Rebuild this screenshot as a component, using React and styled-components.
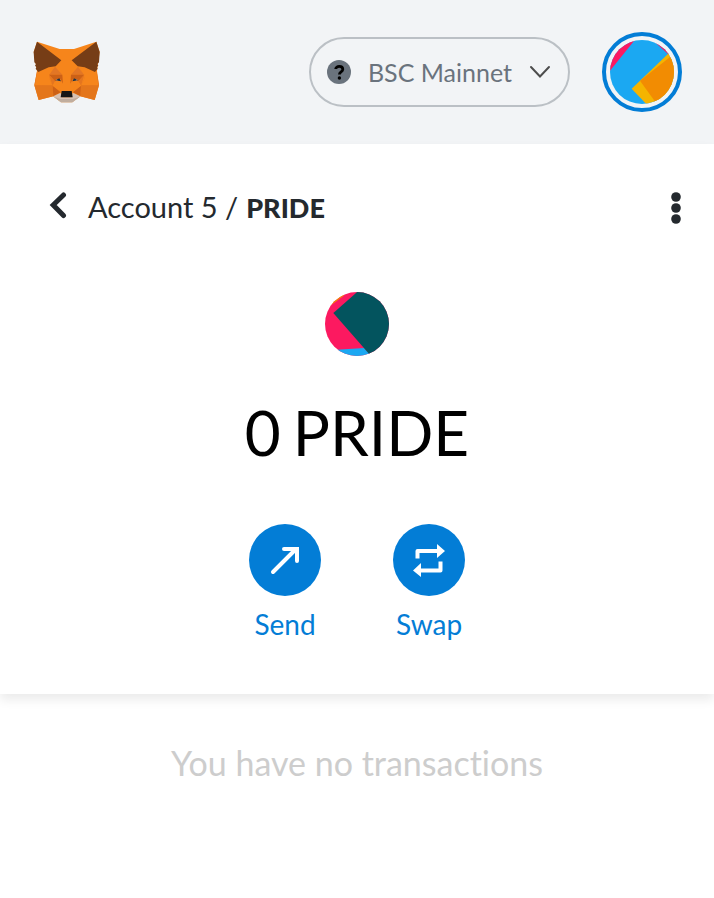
import React from "react";
import styled, { createGlobalStyle } from "styled-components";

const GlobalStyle = createGlobalStyle`
  * { box-sizing: border-box; }
  body {
    margin: 0;
    background: #fff;
    font-family: Lato, "Liberation Sans", sans-serif;
    font-variant-ligatures: none;
  }
  button { font: inherit; color: inherit; background: none; border: 0; padding: 0; cursor: pointer; }
  svg { display: block; }
`;

const Header = styled.header`
  display: flex;
  align-items: center;
  gap: 32px;
  height: 144px;
  padding: 0 32px;
  background: #f2f4f6;
`;

const LogoButton = styled.button`
  margin-right: auto;
`;

const NetworkButton = styled.button`
  && {
    display: flex;
    align-items: center;
    gap: 17px;
    height: 70px;
    padding: 0 17px 0 16px;
    border: 2px solid #bbc0c5;
    border-radius: 35px;
    color: #6a737d;
    font-size: 25px;
    line-height: 36px;
  }
`;

const AccountButton = styled.button`
  && {
    padding: 4px;
    border: 4px solid #037dd6;
    border-radius: 50%;
  }
`;

const Overview = styled.section`
  padding-bottom: 52px;
  box-shadow: 0 6px 10px rgba(0, 0, 0, 0.08);
`;

const NavRow = styled.nav`
  display: flex;
  align-items: center;
  justify-content: space-between;
  height: 128px;
  padding: 0 32px 0 48px;
`;

const Breadcrumb = styled.button`
  && {
    display: flex;
    align-items: center;
    gap: 20px;
    color: #24292e;
    font-size: 29px;
    line-height: 40px;
  }
`;

const Path = styled.span`
  display: flex;
  align-items: baseline;
  gap: 8px;
  padding-bottom: 2px;
`;

const TokenName = styled.b`
  font-size: 27px;
  font-weight: 900;
`;

const MenuButton = styled.button`
  color: #24292e;
`;

const Balance = styled.div`
  display: flex;
  flex-direction: column;
  align-items: center;
  gap: 32px;
  padding-top: 20px;
`;

const Amount = styled.h1`
  display: flex;
  gap: 12px;
  margin: 0;
  color: #000;
  font-size: 62px;
  font-weight: 400;
  line-height: 88px;
`;

const Actions = styled.div`
  display: flex;
  justify-content: center;
  gap: 72px;
  padding-top: 48px;
`;

const ActionButton = styled.button`
  && {
    display: flex;
    flex-direction: column;
    align-items: center;
    gap: 10px;
    width: 72px;
    color: #037dd6;
    font-size: 28px;
    line-height: 36px;
  }
`;

const ActionDisc = styled.span`
  display: grid;
  place-items: center;
  width: 72px;
  height: 72px;
  border-radius: 50%;
  background: #037dd6;
`;

const EmptyNote = styled.p`
  margin: 0;
  padding: 46px 32px;
  color: #cdcdcd;
  font-size: 34px;
  line-height: 46px;
  text-align: center;
`;

function FoxLogo() {
  return (
    <svg width="68" height="62" viewBox="36 33 204 186" aria-hidden="true">
      <path fill="#f6851b" d="M51 35 119 57H162L229 35 239 66 231 123 237 166 224 210 181 199 157 217H123L99 199 56 210 43 166 51 123 41 66Z" />
      <path fill="#e27625" d="M51 124 90 126 99 115 87 144 98 167 43 166ZM230 124 191 126 182 115 194 144 183 167 237 166Z" />
      <path fill="#f6851b" d="M52 124 86 112 100 116 87 143 98 167 45 165ZM229 124 195 112 181 116 194 143 183 167 235 165Z" />
      <path fill="#e4761b" d="M43 166H98L100 199 56 210ZM237 166H183L181 199 224 210Z" />
      <path fill="#763d16" d="M51 35 124 91 107 109 86 112 55 126 47 116 49 111 45 107 48 102 43 97 41 66ZM229 35 155 91 173 109 194 112 225 126 233 116 231 111 235 107 232 102 237 97 239 66Z" />
      <path fill="#e27625" d="M105 110 88 134H127ZM174 110 192 134H153Z" />
      <path fill="#cd6116" d="M87 134 127 134 129 161 121 146 105 154ZM193 134 153 134 151 161 159 146 175 154ZM98 167 122 187 100 199ZM183 167 159 187 181 199Z" />
      <path fill="#e4751f" d="M87 134 105 154 98 167ZM193 134 175 154 183 167Z" />
      <path fill="#f6851b" d="M105 154 123 184 98 167ZM175 154 157 184 183 167Z" />
      <path fill="#233447" d="M106 151 118 145 123 154ZM174 151 162 145 157 154Z" />
      <path fill="#fff" opacity=".35" d="M106 150 111 148 113 152ZM174 150 169 148 167 152Z" />
      <path fill="#d7c1b3" d="M100 199 122 188 125 202H155L158 188 181 199 157 217H123Z" />
      <path fill="#c0ad9e" d="M101 200 122 207H158L180 200 157 217H123Z" />
      <path fill="#161616" d="M125 183H155L158 202H122Z" />
    </svg>
  );
}

function AccountIdenticon() {
  return (
    <svg width="64" height="64" viewBox="48 42 192 192" aria-hidden="true">
      <clipPath id="account-clip"><circle cx="144" cy="138" r="96" /></clipPath>
      <g clipPath="url(#account-clip)">
        <path fill="#1ba8f2" d="M48 42H240V234H48Z" />
        <path fill="#fc1960" d="M40 144 124 40H40ZM172 39 226 88 244 40Z" />
        <path fill="#f5b400" d="M113 188 228 78 250 80V250H172Z" />
        <path fill="#f28c02" d="M138 164 232 90 250 80V250H200Z" />
      </g>
    </svg>
  );
}

function TokenIdenticon() {
  return (
    <svg width="64" height="64" viewBox="45 36 192 192" aria-hidden="true">
      <clipPath id="token-clip"><circle cx="141" cy="132" r="96" /></clipPath>
      <g clipPath="url(#token-clip)">
        <path fill="#fc1960" d="M45 36H237V228H45Z" />
        <path fill="#f28c02" d="M55 82 103 46 70 30 40 60Z" />
        <path fill="#1ba8f2" d="M80 209 162 204 190 235H80Z" />
        <path fill="#03545e" d="M70 99 146 32H245V235H189Z" />
      </g>
    </svg>
  );
}

function QuestionIcon() {
  return (
    <svg width="24" height="24" viewBox="0 0 24 24" aria-hidden="true">
      <circle cx="12" cy="12" r="12" fill="#6a737d" />
      <path d="M8.7 9.1C8.7 5.5 15.8 5.5 15.8 9.3 15.8 12 12.4 11.8 12.4 14.5" fill="none" stroke="#000" strokeWidth="2.8" />
      <circle cx="12.4" cy="18" r="1.7" />
    </svg>
  );
}

function ChevronDownIcon() {
  return (
    <svg width="22" height="14" viewBox="0 0 22 14" fill="none" stroke="#4d4d4d" strokeWidth="2" strokeLinecap="round" aria-hidden="true">
      <path d="m2 2 9 9.5L20 2" />
    </svg>
  );
}

function BackIcon() {
  return (
    <svg width="20" height="32" viewBox="0 0 20 32" fill="none" stroke="#24292e" strokeWidth="5" strokeLinecap="round" strokeLinejoin="miter" aria-hidden="true">
      <path d="M15.5 3 5.2 13 15.5 23.5" />
    </svg>
  );
}

function DotsIcon() {
  return (
    <svg width="12" height="32" viewBox="0 0 12 32" fill="currentColor" aria-hidden="true">
      <circle cx="6" cy="5" r="4.8" />
      <circle cx="6" cy="16" r="4.8" />
      <circle cx="6" cy="27" r="4.8" />
    </svg>
  );
}

function SendIcon() {
  return (
    <svg width="30" height="30" viewBox="0 0 30 30" fill="none" stroke="#fff" strokeWidth="4" strokeLinecap="round" aria-hidden="true">
      <path d="M3 27 26 4M14 4H27V16" />
    </svg>
  );
}

function SwapIcon() {
  return (
    <svg width="34" height="34" viewBox="0 0 34 34" aria-hidden="true">
      <path d="M5.5 15.5V8H26M28.5 18.5V27.5H8" fill="none" stroke="#fff" strokeWidth="4" strokeLinejoin="round" />
      <path fill="#fff" d="M25 1 33 8 25 15ZM9 20 1 27.5 9 34Z" />
    </svg>
  );
}

export default function App() {
  return (
    <>
      <GlobalStyle />
      <Header>
        <LogoButton aria-label="Home"><FoxLogo /></LogoButton>
        <NetworkButton>
          <QuestionIcon />
          <span>BSC Mainnet</span>
          <ChevronDownIcon />
        </NetworkButton>
        <AccountButton aria-label="Accounts"><AccountIdenticon /></AccountButton>
      </Header>
      <main>
        <Overview>
          <NavRow>
            <Breadcrumb>
              <BackIcon />
              <Path>
                <span>Account 5 /</span>{" "}
                <TokenName>PRIDE</TokenName>
              </Path>
            </Breadcrumb>
            <MenuButton aria-label="Token options"><DotsIcon /></MenuButton>
          </NavRow>
          <Balance>
            <TokenIdenticon />
            <Amount>
              <span>0</span>{" "}
              <span>PRIDE</span>
            </Amount>
          </Balance>
          <Actions>
            <ActionButton>
              <ActionDisc><SendIcon /></ActionDisc>
              Send
            </ActionButton>
            <ActionButton>
              <ActionDisc><SwapIcon /></ActionDisc>
              Swap
            </ActionButton>
          </Actions>
        </Overview>
        <EmptyNote>You have no transactions</EmptyNote>
      </main>
    </>
  );
}
